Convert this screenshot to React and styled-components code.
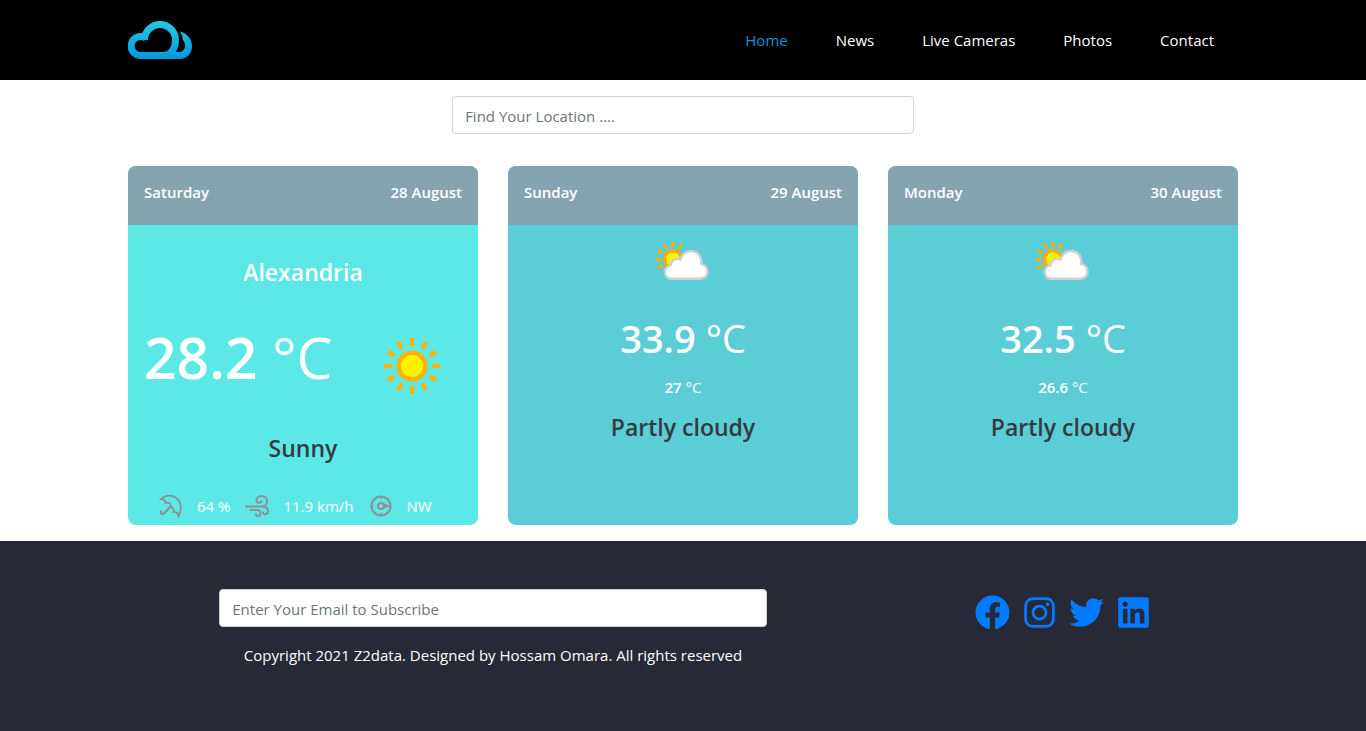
import React from "react";
import styled, { createGlobalStyle } from "styled-components";
import { FaFacebook, FaInstagram, FaTwitter, FaLinkedin } from "react-icons/fa";

const GlobalStyle = createGlobalStyle`
  *, *::before, *::after { box-sizing: border-box; }
  body {
    margin: 0;
    background: #fff;
    color: #fff;
    font-family: "Open Sans", "Noto Sans", sans-serif;
    font-size: 15px;
    line-height: 24px;
  }
  h1, h2, h3, p, ul { margin: 0; padding: 0; }
`;

const Page = styled.div`
  display: flex;
  flex-direction: column;
  min-height: 100vh;
`;

const Container = styled.div`
  width: 100%;
  max-width: 1140px;
  margin: 0 auto;
  padding: 0 15px;
`;

const Header = styled.header`
  background: #000;
`;

const HeaderBar = styled(Container)`
  display: flex;
  align-items: center;
  justify-content: space-between;
  min-height: 80px;
`;

const LogoLink = styled.a`
  display: flex;
`;

const NavList = styled.ul`
  display: flex;
  flex-wrap: wrap;
  list-style: none;
`;

const NavLink = styled.a`
  display: block;
  padding: 8px 24px;
  color: ${({ $active }) => ($active ? "#0a93d5" : "#fff")};
  text-decoration: none;
`;

const Main = styled(Container).attrs({ as: "main" })`
  display: flex;
  flex-direction: column;
  gap: 32px;
  padding-top: 16px;
  padding-bottom: 16px;
`;

const TextField = styled.input`
  display: block;
  width: ${({ $width }) => $width};
  height: 38px;
  margin: 0 auto;
  padding: 7px 12px 5px;
  border: 1px solid #ced4da;
  border-radius: 4px;
  background: #fff;
  color: #495057;
  font: inherit;
  &::placeholder { color: #6c757d; opacity: 1; }
`;

const Cards = styled.section`
  display: grid;
  grid-template-columns: repeat(auto-fit, minmax(300px, 1fr));
  gap: 30px;
`;

const Card = styled.article`
  display: flex;
  flex-direction: column;
  overflow: hidden;
  border-radius: 8px;
  background: ${({ $today }) => ($today ? "#5de8e8" : "#5bcdd7")};
`;

const CardHeader = styled.header`
  display: flex;
  justify-content: space-between;
  padding: 14px 16px 21px;
  background: #84a5b0;
  font-weight: 600;
`;

const CardBody = styled.div`
  display: flex;
  flex-direction: column;
  flex: 1;
  align-items: center;
  padding: ${({ $today }) => ($today ? "32px 16px 7px" : "4px 16px 16px")};
`;

const Title = styled.h2`
  font-size: 23px;
  line-height: 30px;
  font-weight: 600;
`;

const Condition = styled(Title).attrs({ as: "p" })`
  color: #343a40;
`;

const TodayRow = styled.div`
  display: flex;
  align-items: flex-start;
  justify-content: space-between;
  width: 100%;
  padding: 32px 18px 35px 0;
`;

const TodayIcon = styled.div`
  display: flex;
  padding-top: 15px;
`;

const Degrees = styled.p`
  font-size: ${({ $size }) => $size}px;
  line-height: ${({ $line }) => $line}px;
  font-weight: 600;
`;

const Unit = styled.span`
  font-weight: 400;
`;

const DayTemp = styled.div`
  padding: 20px 0 12px;
  text-align: center;
`;

const NightTemp = styled.div`
  padding-bottom: 13px;
`;

const Details = styled.ul`
  display: flex;
  gap: 15px;
  width: 100%;
  padding: 31px 0 0 15px;
  list-style: none;
`;

const Detail = styled.li`
  display: flex;
  align-items: center;
  gap: 14px;
`;

const DetailIcon = styled.svg`
  width: 24px;
  height: 24px;
  flex: none;
  fill: none;
  stroke: #8f8f96;
  stroke-width: 2;
`;

const Footer = styled.footer`
  flex: 1;
  padding: 48px 0 64px;
  background: #282936;
`;

const FooterGrid = styled(Container)`
  display: grid;
  grid-template-columns: 2fr 1fr;
  padding: 0;
`;

const Subscribe = styled.form`
  display: flex;
  flex-direction: column;
  gap: 16px;
  padding: 0 15px;
  text-align: center;
`;

const Social = styled.nav`
  display: flex;
  justify-content: center;
  align-items: flex-start;
  gap: 12px;
  padding: 6px 15px;
`;

const SocialLink = styled.a`
  display: flex;
  color: #007bff;
  svg { width: auto; height: 35px; }
`;

const Logo = () => (
  <svg width="64" height="38" viewBox="0 0 64 38" fill="none" aria-hidden="true">
    <defs>
      <linearGradient id="logo" x1="0" y1="0" x2="0" y2="38" gradientUnits="userSpaceOnUse">
        <stop offset="0" stopColor="#20cbe4" />
        <stop offset="1" stopColor="#0498dc" />
      </linearGradient>
    </defs>
    <g stroke="url(#logo)" strokeWidth="7">
      <path d="M37 34.5H13A9.5 9.5 0 1 1 18 17.2" />
      <path d="M16.5 19A15.5 15.5 0 0 1 47.5 19C47.5 27 43 34.5 36 34.5" />
    </g>
    <path d="M36 38H51.5C58.5 38 64 32.5 64 25.500C64 18 59 12 52 10.500C54 13 54.500 15.500 54.500 18.500C56.500 20.500 57 22.500 57 25C57 28.500 54.500 31 51 31H44Z" fill="url(#logo)" />
  </svg>
);

const rayAngles = (from, to) => {
  const angles = [];
  for (let a = from; a <= to; a += 30) angles.push(a);
  return angles;
};

const SunIcon = () => (
  <svg width="64" height="64" viewBox="0 0 64 64" role="img" aria-label="Sunny">
    {rayAngles(0, 330).map((a) => (
      <rect key={a} x="29.8" y="4" width="4.4" height="7.8" fill="#fdb10a" transform={`rotate(${a} 32 32)`} />
    ))}
    <circle cx="32" cy="32" r="13.3" fill="#fff200" stroke="#ffb300" strokeWidth="4.6" />
  </svg>
);

const PartlyCloudyIcon = () => (
  <svg width="64" height="64" viewBox="0 0 64 64" role="img" aria-label="Partly cloudy">
    {rayAngles(-120, 30).map((a) => (
      <rect key={a} x="20.4" y="13" width="3.2" height="5.4" fill="#fdac08" transform={`rotate(${a} 22 30.3)`} />
    ))}
    <circle cx="22" cy="30.3" r="8.5" fill="#fff200" stroke="#ffa808" strokeWidth="3" />
    <path
      d="M20 49.800A6.700 6.700 0 0 1 19.400 36.500C19.600 31.800 24.700 28.300 29.400 30.700C31 25 35 22 40 22C46.500 22 51.400 27.500 50.200 34.800C54.200 35.800 56.600 39 56.600 42.600C56.600 46.600 53.400 49.800 49.400 49.800Z"
      fill="#fff" stroke="#d0d0d4" strokeWidth="2.4" strokeLinejoin="round"
    />
  </svg>
);

const UmbrellaIcon = () => (
  <DetailIcon viewBox="0 0 24 24" aria-hidden="true">
    <path d="M2 5C9-1 17 2 20 7C23 12 22 17 19.5 22C19 19 17 17.5 14.5 18C15 15 14 13.5 11.5 12.5C12 9.5 10 8 6.500 9C6.500 6.500 5 5.200 2 5Z" strokeWidth="1.800" />
    <path d="M12 12L5.500 19C3 21.500 0.500 19 2.500 16.700" />
  </DetailIcon>
);

const WindIcon = () => (
  <DetailIcon viewBox="0 0 24 24" aria-hidden="true">
    <path d="M0 12.500H16.500C20.500 12.500 22 9.500 22 7C22 4 19.500 2 16.500 2C13.500 2 11.500 4 11.500 6.200C11.500 9.500 16.500 9.500 16.500 6.500" />
    <path d="M17 12.500C21 12.500 23 14.500 23 17C23 21 17.500 21.500 18 17.500" />
    <path d="M4.500 16H12C16.500 16 16.500 22 13 22C11 22 10.500 20.500 11.500 19.500" />
  </DetailIcon>
);

const CompassIcon = () => (
  <DetailIcon viewBox="0 0 24 24" aria-hidden="true">
    <circle cx="12" cy="12" r="9.600" />
    <circle cx="12" cy="12" r="3" />
    <path d="M12 2v3M12 19v3M2 12h2.500M15 10.500L20 12L15 13.500" strokeWidth="1.500" />
  </DetailIcon>
);

const navItems = ["Home", "News", "Live Cameras", "Photos", "Contact"];

const forecast = [
  { day: "Sunday", date: "29 August", high: "33.9", low: "27" },
  { day: "Monday", date: "30 August", high: "32.5", low: "26.6" },
];

const details = [
  { label: "64 %", Icon: UmbrellaIcon },
  { label: "11.9 km/h", Icon: WindIcon },
  { label: "NW", Icon: CompassIcon },
];

const socials = [
  { name: "Facebook", Icon: FaFacebook },
  { name: "Instagram", Icon: FaInstagram },
  { name: "Twitter", Icon: FaTwitter },
  { name: "LinkedIn", Icon: FaLinkedin },
];

export default function App() {
  return (
    <Page>
      <GlobalStyle />
      <Header>
        <HeaderBar>
          <LogoLink href="#" aria-label="Weather home"><Logo /></LogoLink>
          <nav>
            <NavList>
              {navItems.map((item, i) => (
                <li key={item}><NavLink href="#" $active={i === 0}>{item}</NavLink></li>
              ))}
            </NavList>
          </nav>
        </HeaderBar>
      </Header>
      <Main>
        <TextField $width="41.6%" type="text" aria-label="Find your location" placeholder="Find Your Location ...." />
        <Cards>
          <Card $today>
            <CardHeader><span>Saturday</span><span>28 August</span></CardHeader>
            <CardBody $today>
              <Title>Alexandria</Title>
              <TodayRow>
                <Degrees $size={57} $line={76}>28.2 <Unit>°C</Unit></Degrees>
                <TodayIcon><SunIcon /></TodayIcon>
              </TodayRow>
              <Condition>Sunny</Condition>
              <Details>
                {details.map(({ label, Icon }) => (
                  <Detail key={label}><Icon />{label}</Detail>
                ))}
              </Details>
            </CardBody>
          </Card>
          {forecast.map(({ day, date, high, low }) => (
            <Card key={day}>
              <CardHeader><span>{day}</span><span>{date}</span></CardHeader>
              <CardBody>
                <PartlyCloudyIcon />
                <DayTemp><Degrees $size={38} $line={50}>{high} <Unit>°C</Unit></Degrees></DayTemp>
                <NightTemp><Degrees $size={15} $line={24}>{low} <Unit>°C</Unit></Degrees></NightTemp>
                <Condition>Partly cloudy</Condition>
              </CardBody>
            </Card>
          ))}
        </Cards>
      </Main>
      <Footer>
        <FooterGrid>
          <Subscribe>
            <TextField $width="75%" type="email" aria-label="Email" placeholder="Enter Your Email to Subscribe" />
            <p>Copyright 2021 Z2data. Designed by Hossam Omara. All rights reserved</p>
          </Subscribe>
          <Social aria-label="Social media">
            {socials.map(({ name, Icon }) => (
              <SocialLink key={name} href="#" aria-label={name}><Icon /></SocialLink>
            ))}
          </Social>
        </FooterGrid>
      </Footer>
    </Page>
  );
}
